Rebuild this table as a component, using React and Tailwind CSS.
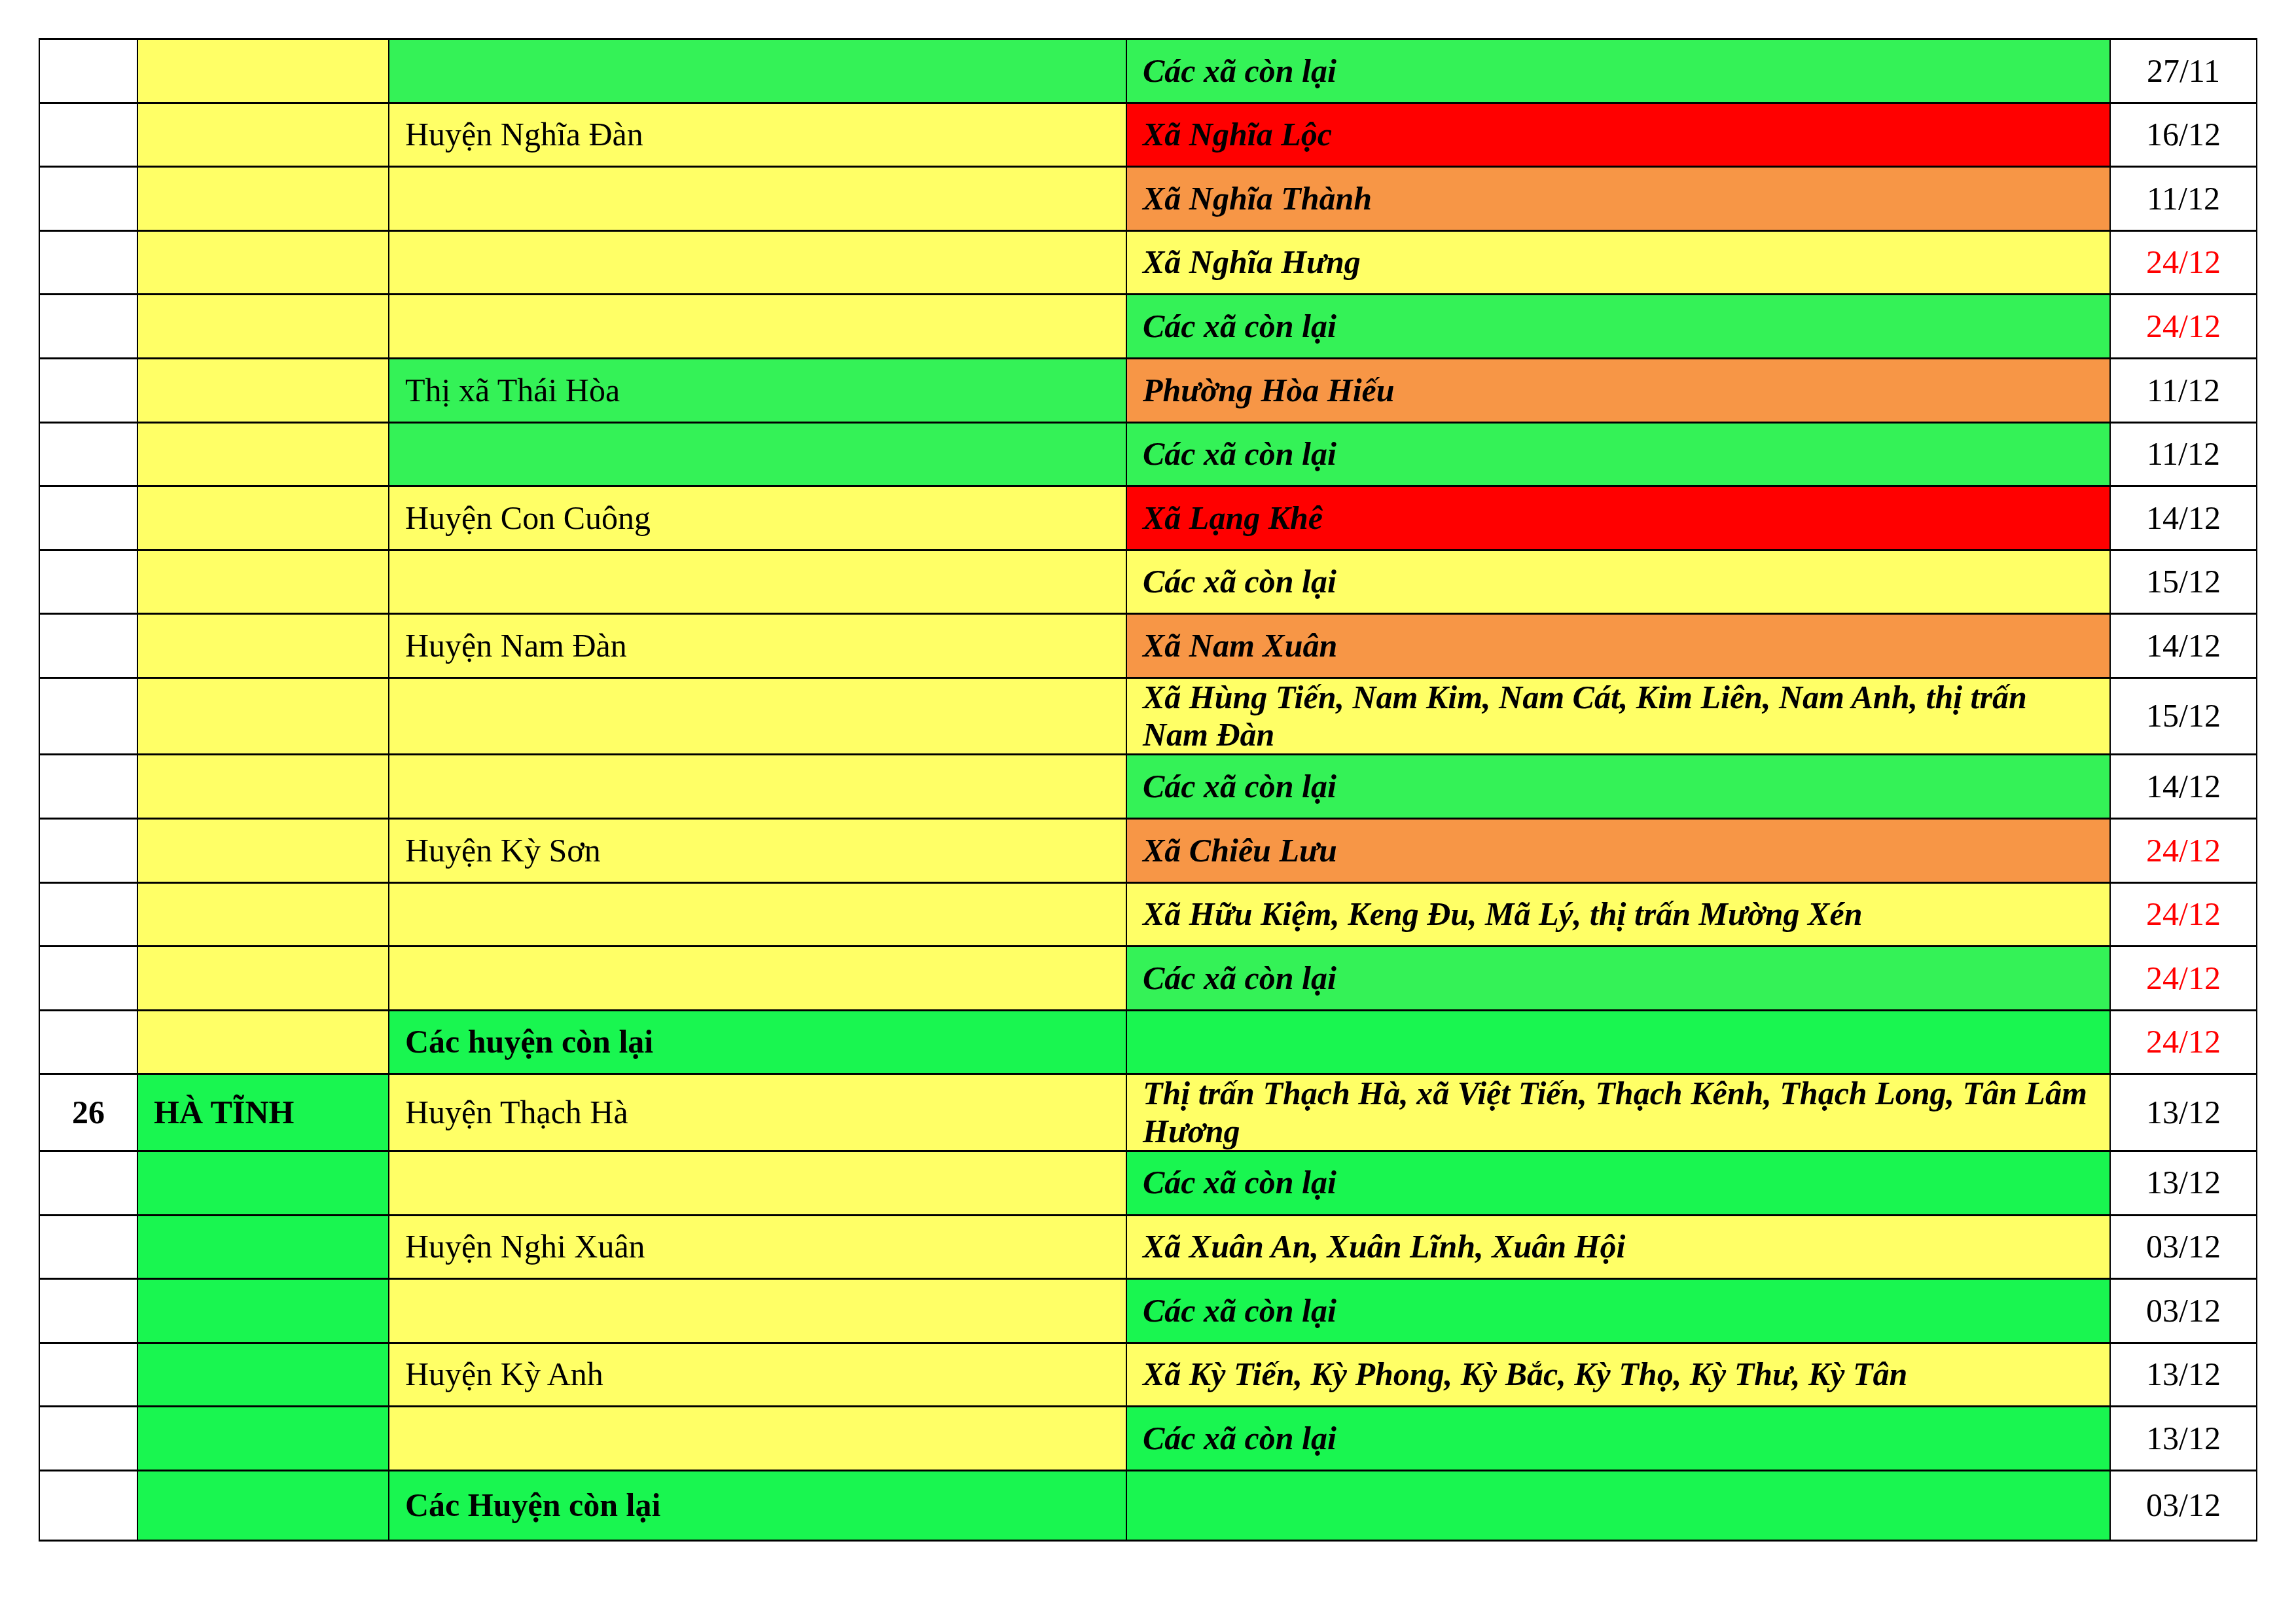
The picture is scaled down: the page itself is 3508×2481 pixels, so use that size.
import React from 'react';

const BG = {
  white: 'bg-white',
  yellow: 'bg-[#ffff66]',
  green: 'bg-[#34f257]',
  lime: 'bg-[#19f650]',
  orange: 'bg-[#f79646]',
  red: 'bg-[#ff0000]',
};

const ROW_H = {
  one: 'h-[97.6px]',
  two: 'h-[117.5px]',
  last: 'h-[107px]',
};

// [stt, tinh, tinhBg, huyen, huyenBg, huyenBold, xa, xaBg, ngay, ngayDo, rowH]
const rows = [
  ['', '', 'yellow', '', 'green', false, 'Các xã còn lại', 'green', '27/11', false, 'one'],
  ['', '', 'yellow', 'Huyện Nghĩa Đàn', 'yellow', false, 'Xã Nghĩa Lộc', 'red', '16/12', false, 'one'],
  ['', '', 'yellow', '', 'yellow', false, 'Xã Nghĩa Thành', 'orange', '11/12', false, 'one'],
  ['', '', 'yellow', '', 'yellow', false, 'Xã Nghĩa Hưng', 'yellow', '24/12', true, 'one'],
  ['', '', 'yellow', '', 'yellow', false, 'Các xã còn lại', 'green', '24/12', true, 'one'],
  ['', '', 'yellow', 'Thị xã Thái Hòa', 'green', false, 'Phường Hòa Hiếu', 'orange', '11/12', false, 'one'],
  ['', '', 'yellow', '', 'green', false, 'Các xã còn lại', 'green', '11/12', false, 'one'],
  ['', '', 'yellow', 'Huyện Con Cuông', 'yellow', false, 'Xã Lạng Khê', 'red', '14/12', false, 'one'],
  ['', '', 'yellow', '', 'yellow', false, 'Các xã còn lại', 'yellow', '15/12', false, 'one'],
  ['', '', 'yellow', 'Huyện Nam Đàn', 'yellow', false, 'Xã Nam Xuân', 'orange', '14/12', false, 'one'],
  ['', '', 'yellow', '', 'yellow', false, 'Xã Hùng Tiến, Nam Kim, Nam Cát, Kim Liên, Nam Anh, thị trấn Nam Đàn', 'yellow', '15/12', false, 'two'],
  ['', '', 'yellow', '', 'yellow', false, 'Các xã còn lại', 'green', '14/12', false, 'one'],
  ['', '', 'yellow', 'Huyện Kỳ Sơn', 'yellow', false, 'Xã Chiêu Lưu', 'orange', '24/12', true, 'one'],
  ['', '', 'yellow', '', 'yellow', false, 'Xã Hữu Kiệm, Keng Đu, Mã Lý, thị trấn Mường Xén', 'yellow', '24/12', true, 'one'],
  ['', '', 'yellow', '', 'yellow', false, 'Các xã còn lại', 'green', '24/12', true, 'one'],
  ['', '', 'yellow', 'Các huyện còn lại', 'lime', true, '', 'lime', '24/12', true, 'one'],
  ['26', 'HÀ TĨNH', 'lime', 'Huyện Thạch Hà', 'yellow', false, 'Thị trấn Thạch Hà, xã Việt Tiến, Thạch Kênh, Thạch Long, Tân Lâm Hương', 'yellow', '13/12', false, 'two'],
  ['', '', 'lime', '', 'yellow', false, 'Các xã còn lại', 'lime', '13/12', false, 'one'],
  ['', '', 'lime', 'Huyện Nghi Xuân', 'yellow', false, 'Xã Xuân An, Xuân Lĩnh, Xuân Hội', 'yellow', '03/12', false, 'one'],
  ['', '', 'lime', '', 'yellow', false, 'Các xã còn lại', 'lime', '03/12', false, 'one'],
  ['', '', 'lime', 'Huyện Kỳ Anh', 'yellow', false, 'Xã Kỳ Tiến, Kỳ Phong, Kỳ Bắc, Kỳ Thọ, Kỳ Thư, Kỳ Tân', 'yellow', '13/12', false, 'one'],
  ['', '', 'lime', '', 'yellow', false, 'Các xã còn lại', 'lime', '13/12', false, 'one'],
  ['', '', 'lime', 'Các Huyện còn lại', 'lime', true, '', 'lime', '03/12', false, 'last'],
];

const cell = 'flex items-center border-r-2 border-black';

export default function App() {
  return (
    <div className="min-h-screen bg-white pt-[58px] font-['Liberation_Serif','Times_New_Roman',serif] text-[50px] leading-[57.5px] text-black">
      <div className="ml-[59px] w-[3390px] border-l-2 border-t-[3px] border-black">
        {rows.map((r, i) => {
          const [stt, tinh, tinhBg, huyen, huyenBg, huyenBold, xa, xaBg, ngay, ngayDo, h] = r;
          return (
            <div key={i} className={`flex ${ROW_H[h]} border-b-[3px] border-black`}>
              <div className={`${cell} w-[150px] justify-center bg-white font-bold`}>{stt}</div>
              <div className={`${cell} w-[384px] px-[24px] font-bold ${BG[tinhBg]}`}>{tinh}</div>
              <div className={`${cell} w-[1127px] px-[24px] ${huyenBold ? 'font-bold' : ''} ${BG[huyenBg]}`}>{huyen}</div>
              <div className={`${cell} w-[1503px] pl-[24px] pr-[26px] font-bold italic ${BG[xaBg]}`}>
                <span>{xa}</span>
              </div>
              <div className={`${cell} w-[224px] justify-center bg-white ${ngayDo ? 'text-[#ff0000]' : ''}`}>{ngay}</div>
            </div>
          );
        })}
      </div>
    </div>
  );
}
